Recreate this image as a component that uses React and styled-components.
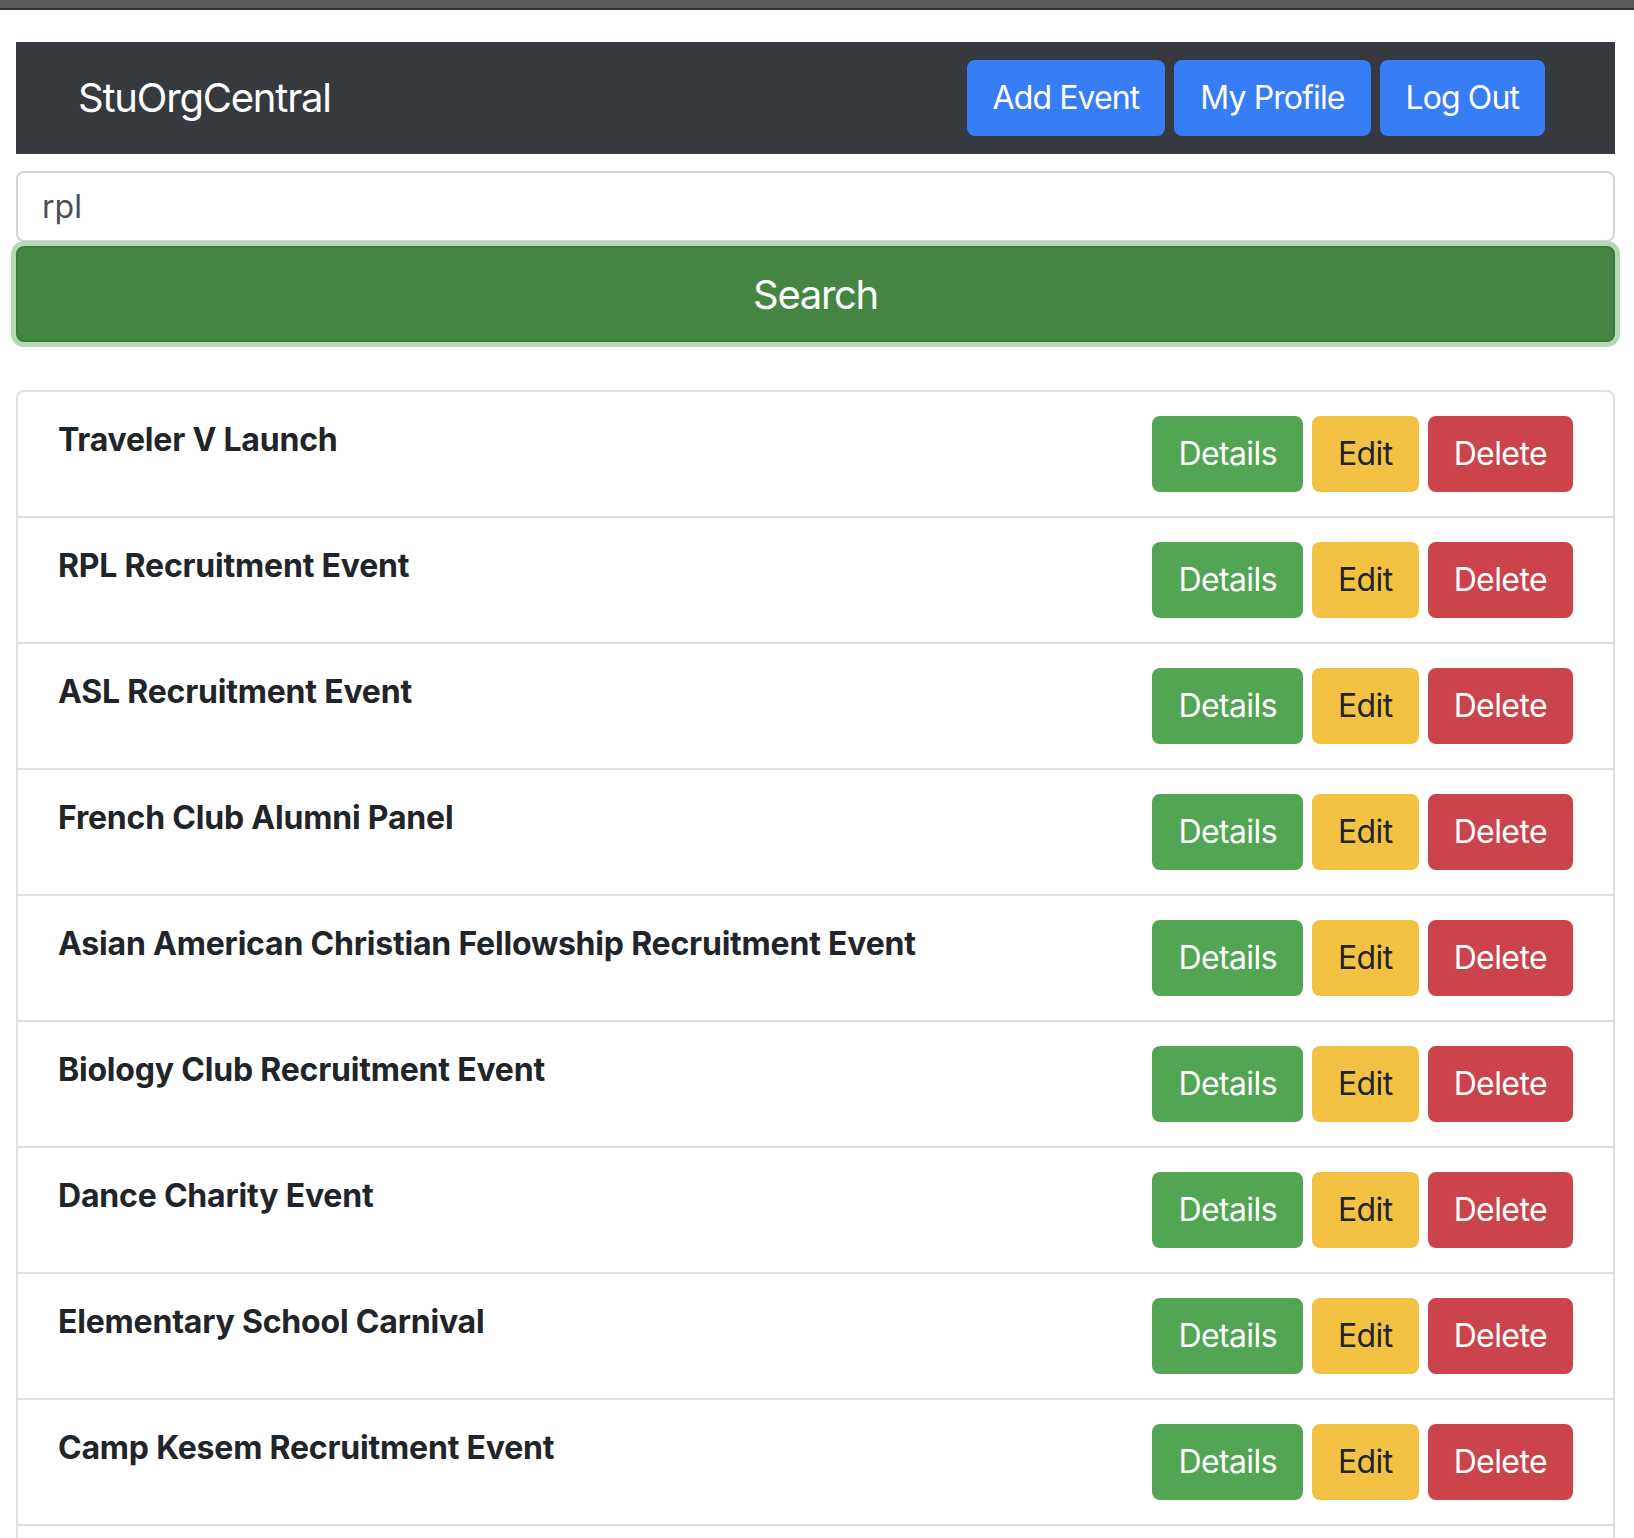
import React from 'react'
import styled, { createGlobalStyle } from 'styled-components'

const GlobalStyle = createGlobalStyle`
  * { box-sizing: border-box; }
  body {
    margin: 0;
    background: #fff;
    font-family: Inter, "Liberation Sans", sans-serif;
    color: #212529;
  }
`

const TopStrip = styled.div`
  height: 10px;
  background: #5a5a5a;
  border-bottom: 2px solid #333;
`

const Page = styled.div`
  padding: 32px 19px 0 16px;
`

const Navbar = styled.nav`
  height: 112px;
  background: #363a3f;
  display: flex;
  align-items: center;
  justify-content: space-between;
  padding: 0 70px 0 62px;
`

const Brand = styled.div`
  color: #fff;
  font-size: 40px;
  line-height: 60px;
  letter-spacing: -1.2px;
`

const NavButtons = styled.div`
  display: flex;
  gap: 9px;
`

const Button = styled.button`
  font-family: inherit;
  font-size: 32px;
  line-height: 48px;
  letter-spacing: ${p => p.$tight ? '-0.9px' : '-0.6px'};
  padding: 12px 24px;
  border: 2px solid ${p => p.$bg};
  border-radius: 8px;
  background: ${p => p.$bg};
  color: ${p => p.$dark ? '#212529' : '#fff'};
  cursor: pointer;
`

const SearchInput = styled.input`
  display: block;
  width: 100%;
  height: 71px;
  margin-top: 17px;
  padding: 0 24px;
  font-family: inherit;
  font-size: 32px;
  color: #495057;
  border: 2px solid #d1d5d9;
  border-radius: 8px;
  outline: none;
`

const SearchButton = styled.button`
  display: block;
  width: 100%;
  height: 96px;
  margin-top: 4px;
  font-family: inherit;
  font-size: 40px;
  letter-spacing: -1.3px;
  color: #fff;
  background: #438541;
  border: 2px solid #3b7a3a;
  border-radius: 8px;
  box-shadow: 0 0 0 5px #b3dab5;
`

const List = styled.ul`
  list-style: none;
  margin: 48px 0 0;
  padding: 0;
  border: 2px solid #dfdfdf;
  border-bottom: none;
  border-radius: 8px 8px 0 0;
`

const Item = styled.li`
  display: flex;
  justify-content: space-between;
  align-items: flex-start;
  padding: 24px 40px;
  border-bottom: 2px solid #dfdfdf;
`

const Title = styled.div`
  font-size: 32px;
  font-weight: 700;
  line-height: 48px;
  letter-spacing: -0.2px;
`

const Actions = styled.div`
  display: flex;
  gap: 9px;
`

const events = [
  'Traveler V Launch',
  'RPL Recruitment Event',
  'ASL Recruitment Event',
  'French Club Alumni Panel',
  'Asian American Christian Fellowship Recruitment Event',
  'Biology Club Recruitment Event',
  'Dance Charity Event',
  'Elementary School Carnival',
  'Camp Kesem Recruitment Event',
  'Spring Formal',
]

const App = () => {
  return (
    <>
      <GlobalStyle />
      <TopStrip />
      <Page>
        <Navbar>
          <Brand>StuOrgCentral</Brand>
          <NavButtons>
            <Button $bg="#377df6" $tight>Add Event</Button>
            <Button $bg="#377df6" $tight>My Profile</Button>
            <Button $bg="#377df6" $tight>Log Out</Button>
          </NavButtons>
        </Navbar>
        <SearchInput defaultValue="rpl" />
        <SearchButton>Search</SearchButton>
        <List>
          {events.map(name => (
            <Item key={name}>
              <Title>{name}</Title>
              <Actions>
                <Button $bg="#52a552">Details</Button>
                <Button $bg="#f4c243" $dark>Edit</Button>
                <Button $bg="#cc444b">Delete</Button>
              </Actions>
            </Item>
          ))}
        </List>
      </Page>
    </>
  )
}

export default App
